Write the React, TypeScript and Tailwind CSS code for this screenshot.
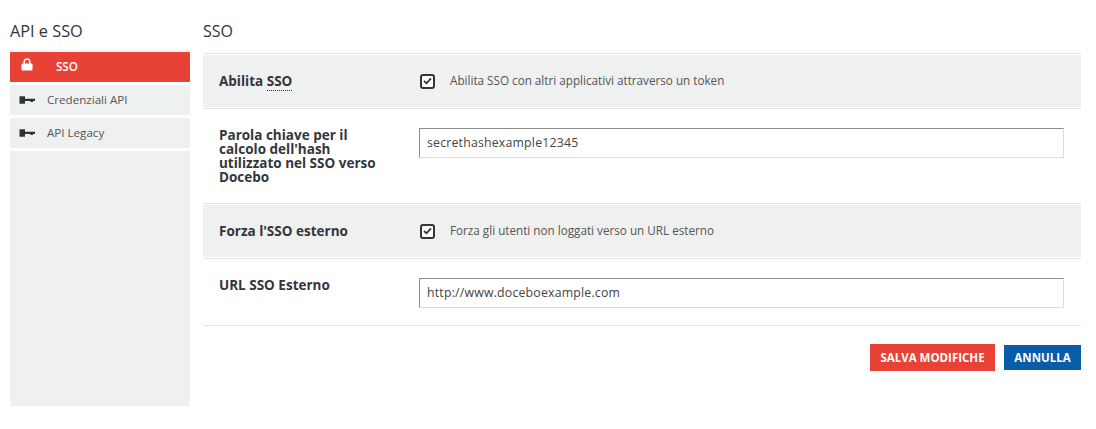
import React from "react";

const KeyIcon = () => (
  <svg width="16" height="8" viewBox="0 0 16 8" className="shrink-0">
    <path d="M0.5 0.3 H6 V2.8 H16 V5 H14 V6 H11.5 V5 H6 V7.7 H0.5 Z" fill="#333" />
  </svg>
);

const LockIcon = () => (
  <svg width="12" height="13" viewBox="0 0 12 13" className="shrink-0">
    <path d="M3.2 6 V3.8 a2.8 2.8 0 0 1 5.6 0 V6" fill="none" stroke="#fff" strokeWidth="1.5" />
    <rect x="0.5" y="5.5" width="11" height="7" rx="1" fill="#fff" />
  </svg>
);

const CheckBox = () => (
  <span className="w-[15px] h-[15px] border-2 border-[#33363b] rounded-[3px] flex items-center justify-center bg-white shrink-0">
    <svg width="9" height="8" viewBox="0 0 9 8">
      <path d="M1 4 L3.5 6.3 L8 1.3" fill="none" stroke="#33363b" strokeWidth="1.8" />
    </svg>
  </span>
);

const TextInput = ({ value }: { value: string }) => (
  <div className="w-[645px] h-[30px] flex items-center pl-[7px] bg-white border border-[#dedede] border-t-[#8c8c8c] border-l-[#8c8c8c] text-[12.3px] tracking-[0.2px] text-[#444]">
    {value}
  </div>
);

const App = () => {
  return (
    <div className="w-[1096px] h-[429px] bg-white flex font-['Open_Sans',sans-serif] overflow-hidden">
      {/* Sidebar */}
      <div className="w-[180px] ml-[10px] shrink-0 flex flex-col">
        <h2 className="h-[51px] mb-px pt-[21px] border-b border-[#eeeeee] text-[16.3px] leading-[20px] text-[#333]">API e SSO</h2>
        <div className="h-[354px] bg-[#eff0f0] flex flex-col">
          <div className="h-[30px] bg-[#e84135] flex items-center text-white text-[11.6px] font-semibold">
            <span className="ml-[11px] mt-[-6px]"><LockIcon /></span>
            <span className="ml-[23px]">SSO</span>
          </div>
          {["Credenziali API", "API Legacy"].map((label) => (
            <div key={label} className="h-[33px] border-t-[3px] border-white flex items-center text-[#555] text-[11.6px]">
              <span className="ml-[9px]"><KeyIcon /></span>
              <span className="ml-[12px]">{label}</span>
            </div>
          ))}
          <div className="h-[3px] bg-white" />
        </div>
      </div>

      {/* Main */}
      <div className="w-[878px] ml-[13px] shrink-0 flex flex-col">
        <h2 className="h-[53px] pt-[21px] text-[16px] leading-[20px] text-[#333]">SSO</h2>

        <div className="h-[56px] border-y border-[#e4e4e4] py-px">
          <div className="h-full bg-[#eff0f0] flex items-center">
            <div className="w-[217px] pl-[16px] text-[13.5px] font-bold text-[#33363b]">
              Abilita <span className="border-b border-dotted border-[#333]">SSO</span>
            </div>
            <CheckBox />
            <span className="ml-[15px] text-[11.7px] text-[#555]">Abilita SSO con altri applicativi attraverso un token</span>
          </div>
        </div>

        <div className="h-[94px] flex pt-[19px]">
          <div className="w-[216px] pl-[16px] pr-[30px] text-[13.5px] leading-[14px] font-bold text-[#33363b]">
            Parola chiave per il calcolo dell'hash utilizzato nel SSO verso Docebo
          </div>
          <TextInput value="secrethashexample12345" />
        </div>

        <div className="h-[56px] border-y border-[#e4e4e4] py-px">
          <div className="h-full bg-[#eff0f0] flex items-center">
            <div className="w-[217px] pl-[16px] text-[13.5px] font-bold text-[#33363b]">Forza l'SSO esterno</div>
            <CheckBox />
            <span className="ml-[15px] text-[11.7px] text-[#555]">Forza gli utenti non loggati verso un URL esterno</span>
          </div>
        </div>

        <div className="h-[67px] flex pt-[19px] border-b border-[#e4e4e4]">
          <div className="w-[216px] pl-[16px] text-[13.5px] leading-[14px] font-bold text-[#33363b]">URL SSO Esterno</div>
          <TextInput value="http://www.doceboexample.com" />
        </div>

        <div className="flex justify-end items-center gap-[9px] mt-[18px]">
          <button className="w-[125px] h-[27px] bg-[#e84135] text-white text-[11.5px] font-bold">SALVA MODIFICHE</button>
          <button className="w-[77px] h-[25px] bg-[#0a5ca8] text-white text-[11.5px] font-bold">ANNULLA</button>
        </div>
      </div>
    </div>
  );
};

export default App;
